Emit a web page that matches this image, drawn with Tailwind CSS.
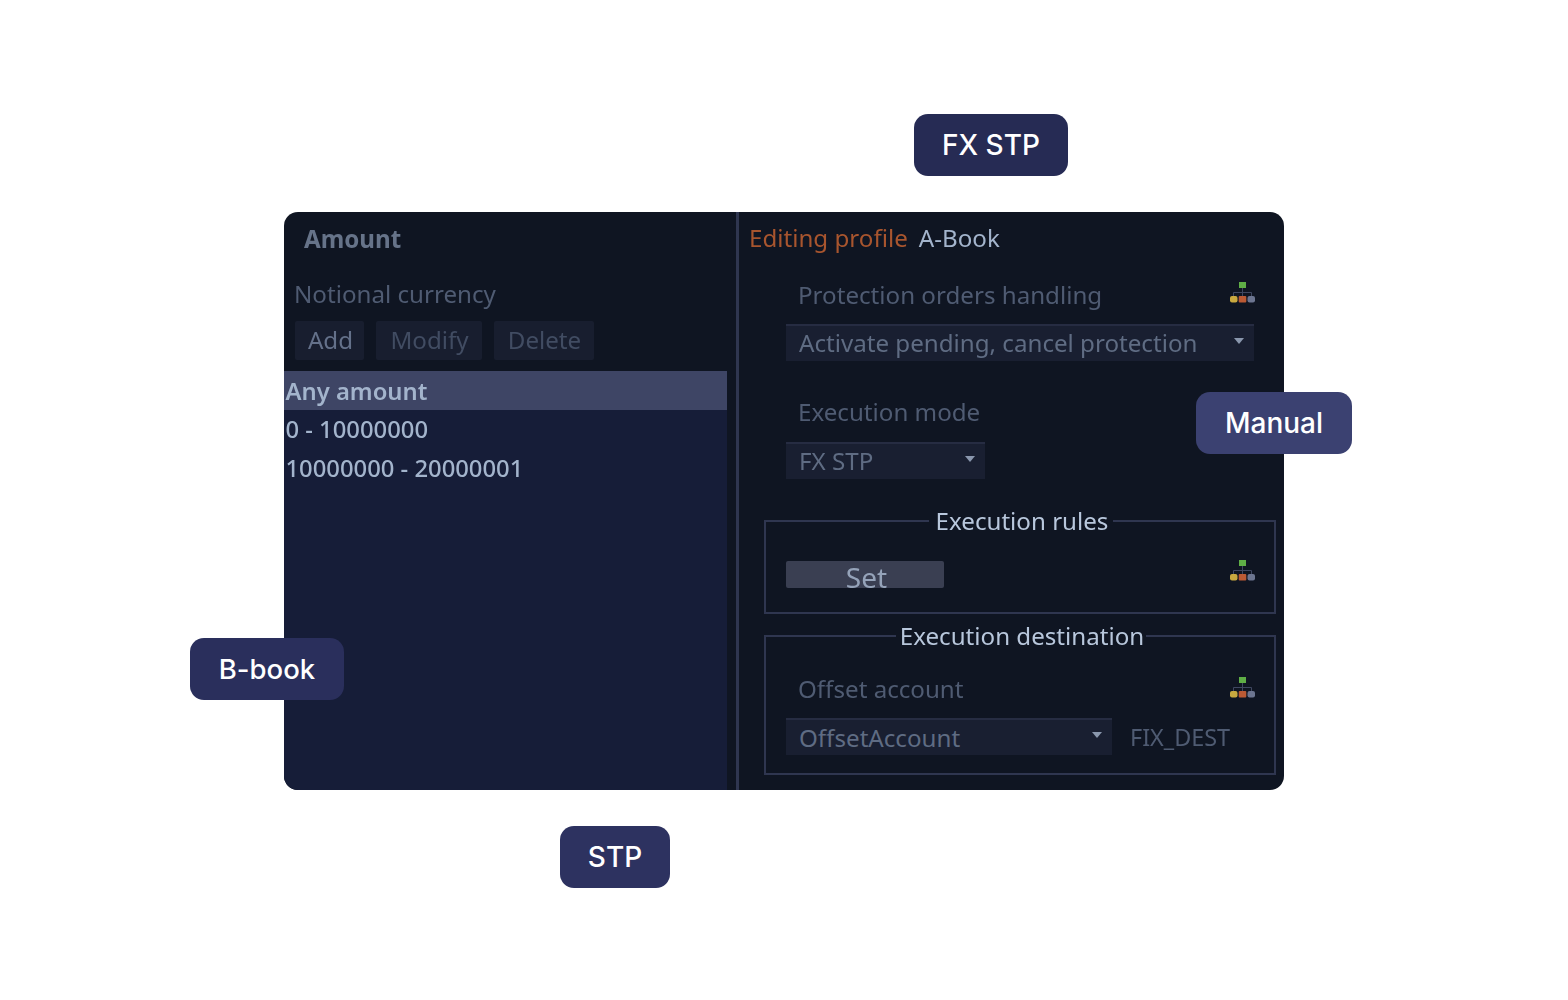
<!doctype html>
<html>
<head>
<meta charset="utf-8">
<script src="https://cdn.jsdelivr.net/npm/@tailwindcss/browser@4"></script>
</head>
<body class="bg-white">
<div class="relative h-[1000px] w-[1568px] overflow-hidden pt-[212px] pl-[284px] font-['Noto_Sans',sans-serif]">
  <!-- Application card -->
  <div class="flex h-[578px] w-[1000px] overflow-hidden rounded-[14px] bg-[#0f1522] text-[24.15px] leading-[32px] blur-[0.5px]">
    <!-- Left column -->
    <div class="flex w-[452px] shrink-0 flex-col">
      <div class="pl-5 pt-[11px] font-bold text-[#667389]">Amount</div>
      <div class="pl-[10px] pt-[23px] text-[#4f5b72]">Notional currency</div>
      <div class="flex gap-[12px] pl-[11px] pt-[11px] text-[#414c62]">
        <div class="flex h-[39px] w-[69px] items-center justify-center rounded-[2px] bg-[#181e2f] pb-[2px] pl-[2px] text-[#64718a]">Add</div>
        <div class="flex h-[39px] w-[106px] items-center justify-center rounded-[2px] bg-[#181e2f] pb-[2px] pl-[1px]">Modify</div>
        <div class="flex h-[39px] w-[100px] items-center justify-center rounded-[2px] bg-[#181e2f] pb-[2px] pl-[1px]">Delete</div>
      </div>
      <div class="mt-[11px] flex w-[443px] flex-1 flex-col bg-[#161d38] text-[23.8px] font-medium text-[#a3b4cc]">
        <div class="flex h-[39px] items-center bg-[#3e4565] pl-[1.500px] font-semibold">Any amount</div>
        <div class="flex h-[38px] items-center pb-[1px] pl-[1.500px]">0 - 10000000</div>
        <div class="flex h-[39px] items-center pl-[1.500px]">10000000 - 20000001</div>
      </div>
    </div>
    <!-- Right column -->
    <div class="flex-1 border-l-[3px] border-[#2f3650] pl-[10px]">
      <div class="flex gap-[11px] pt-[10px]">
        <span class="text-[#a8552e]">Editing profile</span>
        <span class="text-[#a3b4cc]">A-Book</span>
      </div>
      <div class="flex justify-between pl-[49px] pr-[29px] pt-[25px] text-[#4f5b72]">
        <span>Protection orders handling</span>
        <svg class="mt-[3px]" width="25" height="21" viewBox="0 0 25 21"><rect x="9" y="0" width="7" height="6" fill="#5fae46"/><path d="M12.500 6v8M3.500 14v-3.500h18V14" stroke="#3f4760" fill="none"/><rect x="0" y="14" width="7.500" height="6.500" rx="2" fill="#c9a93f"/><rect x="8.700" y="14" width="7.600" height="6.500" rx="1" fill="#bb5a34"/><rect x="17.500" y="14" width="7.500" height="6.500" rx="2" fill="#6c7590"/></svg>
      </div>
      <div class="ml-[37px] mt-[13px] flex h-[37px] w-[468px] items-center justify-between border-t-2 border-[#262c42] bg-[#191f31] pb-[1px] pl-[13px] pr-[10px] text-[#5f6c83]">
        <span>Activate pending, cancel protection</span>
        <svg class="mb-[5px]" width="10" height="6" viewBox="0 0 10 6"><path d="M0 0h10L5 6z" fill="#8a97ad"/></svg>
      </div>
      <div class="pl-[49px] pt-[35px] text-[#4f5b72]">Execution mode</div>
      <div class="ml-[37px] mt-[14px] flex h-[37px] w-[199px] items-center justify-between border-t-2 border-[#262c42] bg-[#191f31] pb-[1px] pl-[13px] pr-[10px] text-[#5f6c83]">
        <span>FX STP</span>
        <svg class="mb-[5px]" width="10" height="6" viewBox="0 0 10 6"><path d="M0 0h10L5 6z" fill="#8a97ad"/></svg>
      </div>
      <fieldset class="ml-[15px] mt-[26px] h-[109px] w-[512px] border-2 border-[#2f3650] pl-[20px] pr-[18px]">
        <legend class="mx-auto translate-x-[1px] px-[6px] text-[#b8c7dc]">Execution rules</legend>
        <div class="flex items-start justify-between pt-[24px]">
          <div class="flex h-[27px] w-[158px] justify-center rounded-[2px] bg-[#3a3f52] pl-[3px] text-[28px] leading-[32px] text-[#95a3b9]">Set</div>
          <svg class="-mt-[1px] mr-[1px]" width="25" height="21" viewBox="0 0 25 21"><rect x="9" y="0" width="7" height="6" fill="#5fae46"/><path d="M12.500 6v8M3.500 14v-3.500h18V14" stroke="#3f4760" fill="none"/><rect x="0" y="14" width="7.500" height="6.500" rx="2" fill="#c9a93f"/><rect x="8.700" y="14" width="7.600" height="6.500" rx="1" fill="#bb5a34"/><rect x="17.500" y="14" width="7.500" height="6.500" rx="2" fill="#6c7590"/></svg>
        </div>
      </fieldset>
      <fieldset class="ml-[15px] mt-[6px] h-[155px] w-[512px] border-2 border-[#2f3650] pl-[20px] pr-[18px]">
        <legend class="mx-auto translate-x-[1px] px-[3px] text-[#b8c7dc]">Execution destination</legend>
        <div class="flex justify-between pl-[12px] pt-[21px] text-[#4f5b72]">
          <span>Offset account</span>
          <svg class="mr-[1px] mt-[4px]" width="25" height="21" viewBox="0 0 25 21"><rect x="9" y="0" width="7" height="6" fill="#5fae46"/><path d="M12.500 6v8M3.500 14v-3.500h18V14" stroke="#3f4760" fill="none"/><rect x="0" y="14" width="7.500" height="6.500" rx="2" fill="#c9a93f"/><rect x="8.700" y="14" width="7.600" height="6.500" rx="1" fill="#bb5a34"/><rect x="17.500" y="14" width="7.500" height="6.500" rx="2" fill="#6c7590"/></svg>
        </div>
        <div class="mt-[13px] flex items-center gap-[18px]">
          <div class="flex h-[37px] w-[326px] items-center justify-between border-t-2 border-[#262c42] bg-[#191f31] pl-[13px] pr-[10px] text-[#5f6c83]">
            <span>OffsetAccount</span>
            <svg class="mb-[5px]" width="10" height="6" viewBox="0 0 10 6"><path d="M0 0h10L5 6z" fill="#8a97ad"/></svg>
          </div>
          <span class="text-[23.4px] text-[#4f5b72]">FIX_DEST</span>
        </div>
      </fieldset>
    </div>
  </div>
  <!-- Callout badges -->
  <div class="absolute left-[914px] top-[114px] flex h-[62px] w-[154px] items-center justify-center rounded-[14px] bg-[#262b54] pb-[1px] font-['Inter',sans-serif] text-[28px] font-medium text-white">FX STP</div>
  <div class="absolute left-[1196px] top-[392px] flex h-[62px] w-[156px] items-center justify-center rounded-[14px] bg-[#3b4171] pb-[1px] font-['Inter',sans-serif] text-[28px] font-medium text-white">Manual</div>
  <div class="absolute left-[190px] top-[638px] flex h-[62px] w-[154px] items-center justify-center rounded-[14px] bg-[#2a2f5c] pt-[1px] font-['Inter',sans-serif] text-[27.5px] font-medium text-white">B-book</div>
  <div class="absolute left-[560px] top-[826px] flex h-[62px] w-[110px] items-center justify-center rounded-[14px] bg-[#2d3260] pb-[1px] font-['Inter',sans-serif] text-[28px] font-medium text-white">STP</div>
</div>
</body>
</html>
